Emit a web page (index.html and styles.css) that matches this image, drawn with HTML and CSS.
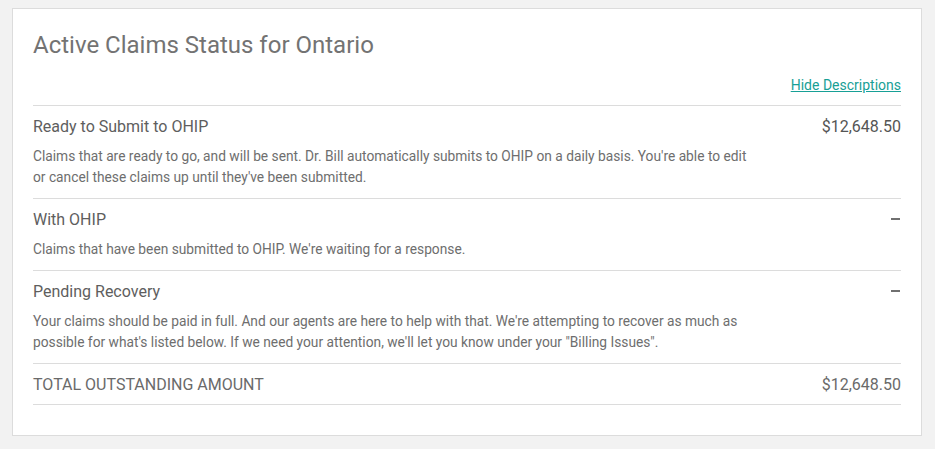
FILE: index.html
```html
<!DOCTYPE html>
<html>
<head>
<meta charset="utf-8">
<link rel="stylesheet" href="styles.css">
</head>
<body>
<div class="page">
  <section class="card">
    <h1 class="title">Active Claims Status for Ontario</h1>
    <div class="toggle-row"><a class="toggle" href="#">Hide Descriptions</a></div>
    <div class="row">
      <div class="row-head"><span class="row-title">Ready to Submit to OHIP</span><span class="amount">$12,648.50</span></div>
      <p class="desc">Claims that are ready to go, and will be sent. Dr. Bill automatically submits to OHIP on a daily basis. You're able to edit or cancel these claims up until they've been submitted.</p>
    </div>
    <div class="row">
      <div class="row-head"><span class="row-title">With OHIP</span><span class="dash"></span></div>
      <p class="desc">Claims that have been submitted to OHIP. We're waiting for a response.</p>
    </div>
    <div class="row">
      <div class="row-head"><span class="row-title">Pending Recovery</span><span class="dash"></span></div>
      <p class="desc">Your claims should be paid in full. And our agents are here to help with that. We're attempting to recover as much as possible for what's listed below. If we need your attention, we'll let you know under your "Billing Issues".</p>
    </div>
    <div class="row total">
      <div class="row-head"><span class="row-title">TOTAL OUTSTANDING AMOUNT</span><span class="amount light">$12,648.50</span></div>
    </div>
  </section>
</div>
</body>
</html>
```
FILE: styles.css
```css
html, body {
  margin: 0;
  padding: 0;
  background: #f2f2f2;
  font-family: Roboto, "Liberation Sans", sans-serif;
}
.page {
  padding: 8px 13px 13px 12px;
}
.card {
  background: #fff;
  border: 1px solid #dcdcdc;
  padding: 22px 20px 30px 20px;
}
.title {
  margin: 0;
  font-size: 24px;
  font-weight: 400;
  line-height: 28px;
  color: #737373;
}
.toggle-row {
  display: flex;
  justify-content: flex-end;
  margin-top: 16px;
  padding-bottom: 10px;
  border-bottom: 1px solid #dcdcdc;
}
.toggle {
  font-size: 14px;
  line-height: 20px;
  color: #17a096;
  text-decoration: underline;
}
.row {
  padding: 10px 0;
  border-bottom: 1px solid #dcdcdc;
}
.row-head {
  display: flex;
  justify-content: space-between;
  align-items: center;
  height: 20px;
}
.row-title {
  font-size: 16px;
  color: #5e5e5e;
  font-weight: 400;
}
.amount {
  font-size: 16px;
  color: #555555;
  font-weight: 400;
}
.amount.light {
  color: #6a6a6a;
}
.dash {
  width: 9px;
  height: 2px;
  background: #707070;
  margin-right: 1px;
}
.desc {
  margin: 10px 0 0 0;
  max-width: 720px;
  font-size: 13.75px;
  line-height: 21px;
  color: #6e6e6e;
}
.total .row-title {
  color: #6a6a6a;
}
```
